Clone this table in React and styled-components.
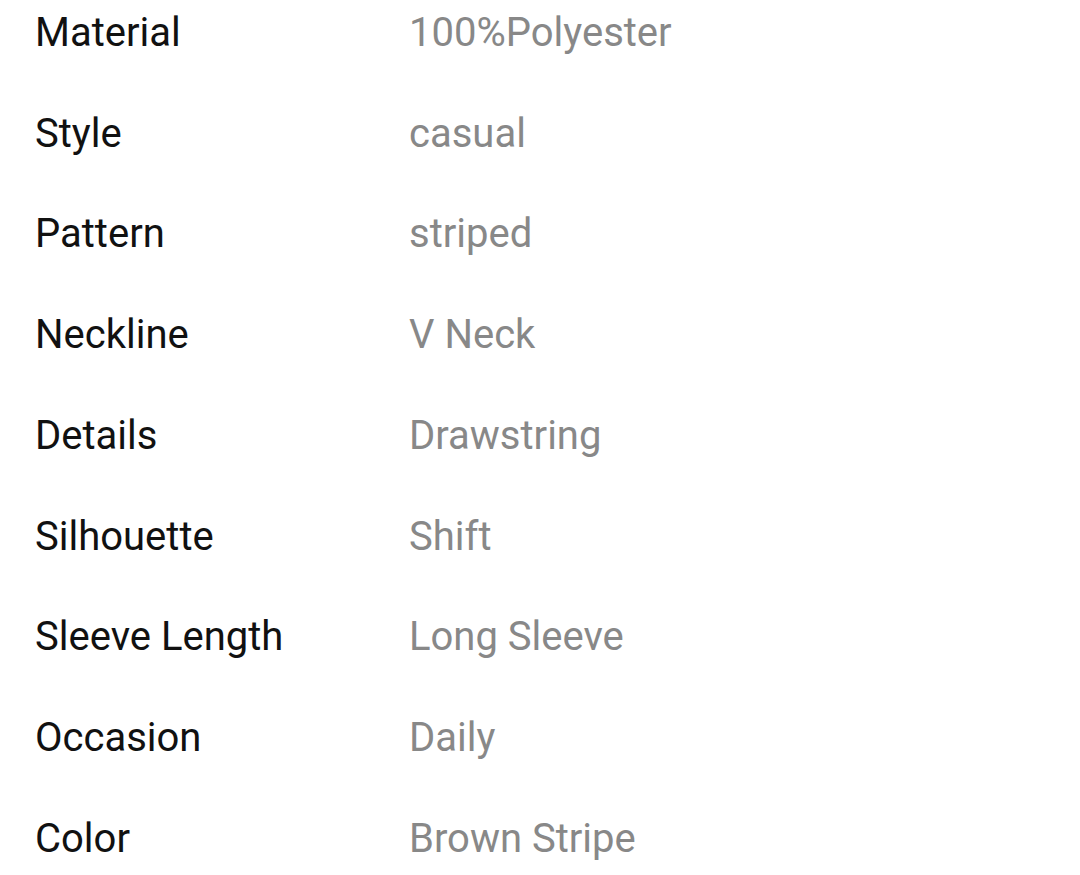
import React from "react";
import styled, { createGlobalStyle } from "styled-components";

const Global = createGlobalStyle`
  html, body { margin: 0; padding: 0; background: #fff; }
  body { font-family: Roboto, "Noto Sans", sans-serif; }
`;

const Table = styled.div`
  display: flex;
  flex-direction: column;
  padding: 0 0 0 35px;
`;

const Row = styled.div`
  display: grid;
  grid-template-columns: 374px 1fr;
  align-items: center;
  height: 100.75px;
  margin-top: ${(p) => (p.$first ? "-18px" : "0")};
  font-size: 40px;
`;

const Label = styled.span`
  color: #111;
`;

const Value = styled.span`
  color: #888;
`;

const rows = [
  ["Material", "100%Polyester"],
  ["Style", "casual"],
  ["Pattern", "striped"],
  ["Neckline", "V Neck"],
  ["Details", "Drawstring"],
  ["Silhouette", "Shift"],
  ["Sleeve Length", "Long Sleeve"],
  ["Occasion", "Daily"],
  ["Color", "Brown Stripe"],
];

export default function App() {
  return (
    <>
      <Global />
      <Table>
        {rows.map(([k, v], i) => (
          <Row key={k} $first={i === 0}>
            <Label>{k}</Label>
            <Value>{v}</Value>
          </Row>
        ))}
      </Table>
    </>
  );
}
